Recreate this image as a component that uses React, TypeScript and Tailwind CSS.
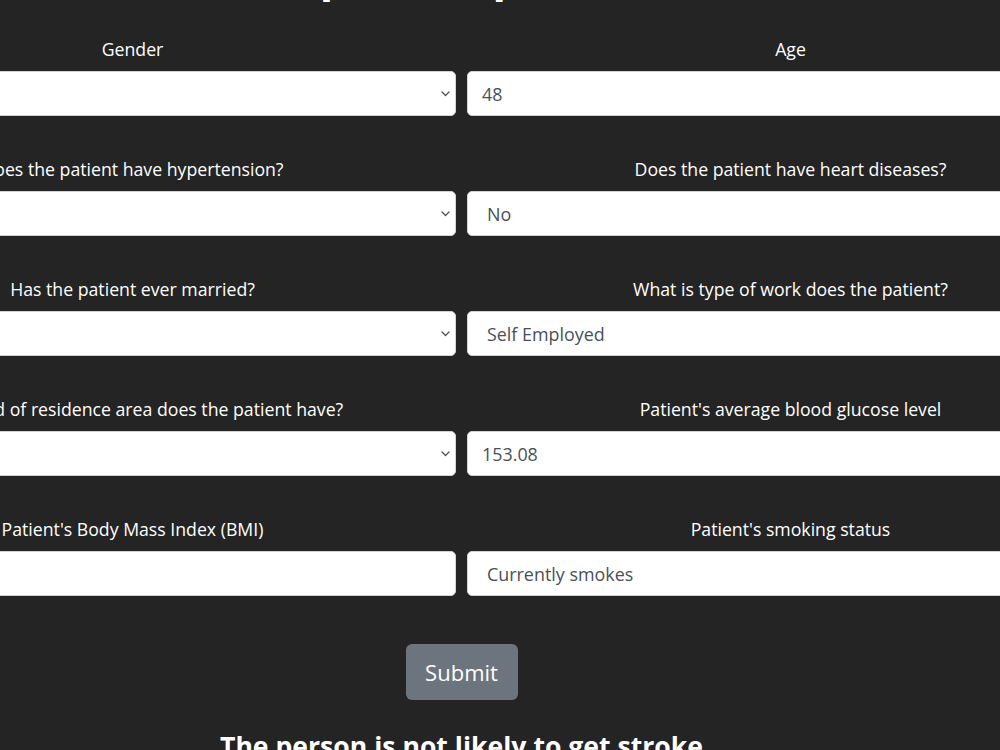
import React from "react";

const font = { fontFamily: '"Open Sans", "Noto Sans", sans-serif' };

function Chevron() {
  return (
    <svg width="9" height="6" viewBox="0 0 9 6" className="absolute right-[5px] top-1/2 -translate-y-1/2">
      <path d="M1 1 L4.5 4.5 L8 1" fill="none" stroke="#555" strokeWidth="1.3" strokeLinecap="round" strokeLinejoin="round" />
    </svg>
  );
}

function Field({ label, value, select, selectPad }: { label: string; value: string; select?: boolean; selectPad?: boolean }) {
  return (
    <div className="flex flex-col">
      <label className="text-center text-white text-[17.7px] leading-[26px] mb-[9px]">{label}</label>
      <div
        className={`relative h-[45px] mb-[40px] bg-white border border-[#ced4da] rounded-[5px] flex items-center pt-[2px] text-[17.9px] text-[#495057] ${
          selectPad ? "pl-[19px]" : "pl-[14px]"
        }`}
      >
        <span>{value}</span>
        {select && <Chevron />}
      </div>
    </div>
  );
}

export default function App() {
  return (
    <div className="w-[1000px] h-[750px] overflow-hidden bg-[#242424]" style={font}>
      <div className="w-[1305px] ml-[-191px]">
        <h1 className="text-center text-white font-bold text-[44px] leading-[44px] mt-[-48px] mb-[40px]">
          Please input the patient's data
        </h1>
        <div className="grid grid-cols-2 gap-x-[11px]">
          <Field label="Gender" value="Male" select selectPad />
          <Field label="Age" value="48" />
          <Field label="Does the patient have hypertension?" value="No" select selectPad />
          <Field label="Does the patient have heart diseases?" value="No" select selectPad />
          <Field label="Has the patient ever married?" value="Yes" select selectPad />
          <Field label="What is type of work does the patient?" value="Self Employed" select selectPad />
          <Field label="What kind of residence area does the patient have?" value="Urban" select selectPad />
          <Field label="Patient's average blood glucose level" value="153.08" />
          <Field label="Patient's Body Mass Index (BMI)" value="31.2" />
          <Field label="Patient's smoking status" value="Currently smokes" select selectPad />
        </div>
        <div className="flex justify-center mt-[8px]">
          <button className="w-[112px] h-[56px] rounded-[6px] bg-[#6c757d] text-white text-[22px]">Submit</button>
        </div>
        <p className="text-center text-white font-bold text-[26.6px] leading-[34px] mt-[29px]">
          The person is not likely to get stroke
        </p>
      </div>
    </div>
  );
}
